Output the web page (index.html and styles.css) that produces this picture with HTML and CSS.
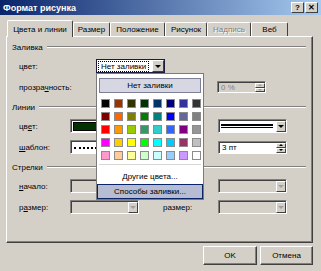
FILE: index.html
```html
<!DOCTYPE html>
<html lang="ru">
<head>
  <meta charset="UTF-8">
  <title>Формат рисунка</title>
  <link rel="stylesheet" href="styles.css">
</head>
<body>
  <div class="dialog">
    <div class="titlebar">
      <span class="title">Формат рисунка</span>
      <div class="caption-btns">
        <span class="cbtn">?</span>
        <span class="cbtn">✕</span>
      </div>
    </div>

    <div class="tabs">
      <div class="tab active" style="width:66px">Цвета и линии</div>
      <div class="tab" style="width:37px">Размер</div>
      <div class="tab" style="width:55px">Положение</div>
      <div class="tab" style="width:42px">Рисунок</div>
      <div class="tab disabled" style="width:44px">Надпись</div>
      <div class="tab" style="width:37px">Веб</div>
    </div>

    <div class="panel">
      <div class="group-title">Заливка</div>
      <div class="row">
        <span class="label">цвет:</span>
        <div class="combo fill-combo">
          <span class="combo-text"><span class="focus">Нет заливки</span></span>
          <span class="drop"><i class="tri"></i></span>
        </div>
      </div>
      <div class="row">
        <span class="label">прозра<u>ч</u>ность:</span>
        <span></span>
        <span></span>
        <div class="spin off pct">
          <span class="spin-text">0 %</span>
          <span class="spin-btns"><i class="up"></i><i class="down"></i></span>
        </div>
      </div>

      <div class="group-title gap">Линии</div>
      <div class="row">
        <span class="label">цв<u>е</u>т:</span>
        <div class="colorbox"><span class="swatch-big"></span></div>
        <span></span>
        <div class="combo">
          <span class="combo-text"><span class="dline"></span></span>
          <span class="drop"><i class="tri"></i></span>
        </div>
      </div>
      <div class="row">
        <span class="label"><u>ш</u>аблон:</span>
        <div class="colorbox pattern"><span class="dots"></span></div>
        <span></span>
        <div class="spin">
          <span class="spin-text">3 пт</span>
          <span class="spin-btns"><i class="up"></i><i class="down"></i></span>
        </div>
      </div>

      <div class="group-title gap">Стрелки</div>
      <div class="row">
        <span class="label"><u>н</u>ачало:</span>
        <div class="combo off"><span class="combo-text"></span><span class="drop"><i class="tri"></i></span></div>
        <span></span>
        <div class="combo off"><span class="combo-text"></span><span class="drop"><i class="tri"></i></span></div>
      </div>
      <div class="row">
        <span class="label">р<u>а</u>змер:</span>
        <div class="combo off"><span class="combo-text"></span><span class="drop"><i class="tri"></i></span></div>
        <span class="label">размер:</span>
        <div class="combo off"><span class="combo-text"></span><span class="drop"><i class="tri"></i></span></div>
      </div>
    </div>

    <div class="footer">
      <button class="btn ok">OK</button>
      <button class="btn cancel">Отмена</button>
    </div>

    <div class="popup">
      <div class="nofill">Нет заливки</div>
      <div class="palette" id="palette"></div>
      <div class="sep"></div>
      <div class="menu-item"><u>Д</u>ругие цвета...</div>
      <div class="menu-item hot">Способы заливки...</div>
    </div>
  </div>

  <script>
    const colors = [
      '#000000', '#993300', '#333300', '#003300', '#003366', '#000080', '#333399', '#333333',
      '#800000', '#FF6600', '#808000', '#008000', '#008080', '#0000FF', '#666699', '#808080',
      '#FF0000', '#FF9900', '#99CC00', '#339966', '#33CCCC', '#3366FF', '#800080', '#969696',
      '#FF00FF', '#FFCC00', '#FFFF00', '#00FF00', '#00FFFF', '#00CCFF', '#993366', '#C0C0C0',
      '#FF99CC', '#FFCC99', '#FFFF99', '#CCFFCC', '#CCFFFF', '#99CCFF', '#CC99FF', '#FFFFFF'
    ];

    const palette = document.getElementById('palette');
    colors.forEach(c => {
      const cell = document.createElement('span');
      cell.className = 'cell';
      cell.style.background = c;
      palette.appendChild(cell);
    });
  </script>
</body>
</html>
```

FILE: styles.css
```css
body {
  margin: 0;
  font-family: "Liberation Sans", Arial, sans-serif;
  font-size: 8px;
  color: #000;
}
.dialog {
  position: relative;
  width: 321px;
  height: 271px;
  background: #d4d0c8;
  display: flex;
  flex-direction: column;
  overflow: hidden;
}

/* title bar */
.titlebar {
  height: 15px;
  flex: none;
  background: linear-gradient(to right, #0a246a, #a6caf0);
  display: flex;
  align-items: center;
  justify-content: space-between;
  padding: 0 3px 0 3px;
}
.title {
  color: #fff;
  font-weight: bold;
  font-size: 9px;
}
.caption-btns {
  display: flex;
  gap: 1px;
}
.cbtn {
  width: 11px;
  height: 9px;
  background: #d4d0c8;
  border: 1px solid;
  border-color: #fff #404040 #404040 #fff;
  font-size: 8px;
  font-weight: bold;
  line-height: 9px;
  text-align: center;
}

/* tabs */
.tabs {
  display: flex;
  align-items: flex-end;
  height: 16px;
  flex: none;
  margin-top: 5px;
  padding-left: 7px;
}
.tab {
  box-sizing: border-box;
  height: 14px;
  border: 1px solid;
  border-color: #fff #404040 transparent #fff;
  border-bottom: none;
  border-radius: 2px 2px 0 0;
  display: flex;
  align-items: center;
  justify-content: center;
  background: #d4d0c8;
}
.tab.active {
  position: relative;
  z-index: 2;
  height: 17px;
  margin-bottom: -1px;
}
.tab.disabled {
  color: #808080;
  text-shadow: 1px 1px 0 #fff;
}

/* panel */
.panel {
  box-sizing: border-box;
  margin-left: 6px;
  width: 307px;
  height: 207px;
  flex: none;
  border: 1px solid;
  border-color: #fff #404040 #404040 #fff;
  box-shadow: inset -1px -1px 0 #808080;
  padding: 3px 0 0 12px;
}
.group-title {
  display: flex;
  align-items: center;
  height: 14px;
  margin-left: -7px;
  margin-bottom: 5px;
}
.group-title::after {
  content: "";
  flex: 1;
  border-top: 1px solid #808080;
  border-bottom: 1px solid #fff;
  margin: 0 6px 0 4px;
}
.group-title.gap {
  margin-top: 6px;
}
.row {
  display: grid;
  grid-template-columns: 51px 93px 55px 69px;
  align-items: center;
  height: 14px;
}
.row + .row {
  margin-top: 7px;
}

/* combo boxes */
.combo {
  box-sizing: border-box;
  height: 14px;
  width: 69px;
  display: flex;
  background: #fff;
  border: 1px solid;
  border-color: #808080 #fff #fff #808080;
  box-shadow: inset 1px 1px 0 #404040;
}
.combo-text {
  flex: 1;
  display: flex;
  align-items: center;
  padding-left: 2px;
}
.drop {
  width: 10px;
  margin: 1px 0 0 0;
  background: #d4d0c8;
  border: 1px solid;
  border-color: #fff #404040 #404040 #fff;
  box-sizing: border-box;
  display: flex;
  align-items: center;
  justify-content: center;
}
.tri {
  width: 0;
  height: 0;
  border-left: 3px solid transparent;
  border-right: 3px solid transparent;
  border-top: 3px solid #000;
}
.combo.off {
  background: #d4d0c8;
}
.combo.off .tri {
  border-top-color: #a0a0a0;
}
.fill-combo {
  grid-column: 2 / 4;
  margin-left: 26px;
  border: 1px solid #1c1c3c;
  box-shadow: none;
}
.fill-combo .combo-text {
  padding-left: 1px;
}
.focus {
  border: 1px dotted #000;
  padding: 0 2px;
  line-height: 9px;
}
.fill-combo .drop {
  margin: 0;
  width: 12px;
}
.dline {
  display: block;
  width: 52px;
  height: 1px;
  border-top: 2px solid #000;
  border-bottom: 1px solid #000;
}

/* line color and pattern boxes */
.colorbox {
  box-sizing: border-box;
  width: 70px;
  height: 14px;
  background: #fff;
  border: 1px solid;
  border-color: #808080 #fff #fff #808080;
  box-shadow: inset 1px 1px 0 #404040;
  padding: 2px 2px 1px 2px;
  display: flex;
}
.swatch-big {
  flex: 1;
  background: #003300;
  border: 1px solid #000;
}
.pattern {
  align-items: center;
  padding-left: 3px;
}
.dots {
  flex: 1;
  border-top: 2px dotted #000;
}

/* spinners */
.spin {
  box-sizing: border-box;
  height: 13px;
  width: 69px;
  display: flex;
  background: #fff;
  border: 1px solid;
  border-color: #808080 #fff #fff #808080;
  box-shadow: inset 1px 1px 0 #404040;
}
.spin-text {
  flex: 1;
  display: flex;
  align-items: center;
  padding-left: 3px;
}
.spin-btns {
  width: 10px;
  margin-top: 1px;
  display: flex;
  flex-direction: column;
}
.spin-btns i {
  flex: 1;
  box-sizing: border-box;
  background: #d4d0c8;
  border: 1px solid;
  border-color: #fff #404040 #404040 #fff;
  display: flex;
  align-items: center;
  justify-content: center;
}
.spin-btns i::after {
  content: "";
  border-left: 2px solid transparent;
  border-right: 2px solid transparent;
}
.spin-btns .up::after {
  border-bottom: 2px solid #000;
}
.spin-btns .down::after {
  border-top: 2px solid #000;
}
.spin.off {
  background: #d4d0c8;
  color: #808080;
}
.spin.off .up::after {
  border-bottom-color: #a0a0a0;
}
.spin.off .down::after {
  border-top-color: #a0a0a0;
}
.pct {
  width: 49px;
  height: 12px;
  margin-left: -1px;
}

/* buttons */
.footer {
  display: flex;
  justify-content: flex-end;
  gap: 3px;
  padding-right: 8px;
  margin-top: 3px;
}
.btn {
  box-sizing: border-box;
  height: 19px;
  background: #d4d0c8;
  border: 1px solid;
  border-color: #fff #404040 #404040 #fff;
  box-shadow: inset -1px -1px 0 #808080;
  font-family: "Liberation Sans", Arial, sans-serif;
  font-size: 8px;
  padding: 0;
}
.btn.ok {
  width: 54px;
}
.btn.cancel {
  width: 53px;
}

/* colour popup */
.popup {
  position: absolute;
  left: 96px;
  top: 73px;
  width: 108px;
  height: 127px;
  box-sizing: border-box;
  background: #fff;
  border: 1px solid #7b7b7b;
  padding: 4px 2px 0 2px;
  z-index: 5;
}
.nofill {
  box-sizing: border-box;
  height: 15px;
  background: #d6d7e3;
  border: 1px solid #7d8096;
  display: flex;
  align-items: center;
  justify-content: center;
}
.palette {
  display: grid;
  grid-template-columns: repeat(8, 9px);
  grid-auto-rows: 9px;
  gap: 4px;
  margin: 6px 0 0 2px;
}
.cell {
  box-sizing: border-box;
  border: 1px solid #8c8c8c;
}
.sep {
  height: 1px;
  background: #d8d6d0;
  margin: 4px 0 0 0;
}
.menu-item {
  box-sizing: border-box;
  height: 15px;
  display: flex;
  align-items: center;
  justify-content: center;
}
.sep + .menu-item {
  margin-top: 4px;
}
.menu-item.hot {
  margin: 0 -2px;
  background: #b6bdd2;
  border: 1px solid #0a246a;
}
```
